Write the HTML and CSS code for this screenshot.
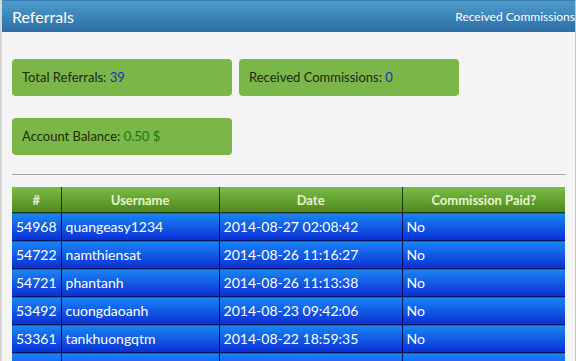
FILE: index.html
```
<!DOCTYPE html>
<html lang="en">
<head>
  <meta charset="UTF-8">
  <title>Referrals</title>
  <link rel="stylesheet" href="styles.css">
</head>
<body>
  <div class="panel">
    <div class="panel-head">
      <h1>Referrals</h1>
      <span class="head-link">Received Commissions</span>
    </div>
    <div class="panel-body">
      <div class="stats">
        <div class="stat">Total Referrals: <span class="num">39</span></div>
        <div class="stat">Received Commissions: <span class="num">0</span></div>
        <div class="stat">Account Balance: <span class="money">0.50 $</span></div>
      </div>
      <hr>
      <table class="refs">
        <thead>
          <tr><th class="c-id">#</th><th class="c-user">Username</th><th class="c-date">Date</th><th>Commission Paid?</th></tr>
        </thead>
        <tbody>
          <tr><td>54968</td><td>quangeasy1234</td><td>2014-08-27 02:08:42</td><td>No</td></tr>
          <tr><td>54722</td><td>namthiensat</td><td>2014-08-26 11:16:27</td><td>No</td></tr>
          <tr><td>54721</td><td>phantanh</td><td>2014-08-26 11:13:38</td><td>No</td></tr>
          <tr><td>53492</td><td>cuongdaoanh</td><td>2014-08-23 09:42:06</td><td>No</td></tr>
          <tr><td>53361</td><td>tankhuongqtm</td><td>2014-08-22 18:59:35</td><td>No</td></tr>
          <tr><td>53360</td><td>tanfhuong</td><td>2014-08-22 18:51:02</td><td>No</td></tr>
        </tbody>
      </table>
    </div>
  </div>
</body>
</html>
```

FILE: styles.css
```
body {
  margin: 0;
  font-family: Lato, 'Open Sans', Arial, sans-serif;
  background: #fff;
  color: #1c2b14;
}
.panel {
  border-left: 2px solid #d6d6d6;
  border-right: 1px solid #c8c8c8;
  background: #f4f4f4;
  height: 361px;
  overflow: hidden;
}
.panel-head {
  height: 32px;
  margin-left: -2px;
  display: flex;
  align-items: center;
  justify-content: space-between;
  padding: 0 0 0 12px;
  background: linear-gradient(#4d9ccb, #2d6da4);
  border-top: 1px solid #3a7cb0;
  box-sizing: border-box;
  color: #fff;
}
.panel-head h1 {
  margin: 0;
  font-size: 16px;
  font-weight: normal;
}
.head-link {
  font-size: 12px;
  white-space: nowrap;
}
.panel-body {
  padding: 27px 9px 0 10px;
}
.stats {
  display: grid;
  grid-template-columns: 220px 220px;
  gap: 22px 7px;
}
.stat {
  background: #7ab648;
  border-radius: 4px;
  height: 37px;
  line-height: 37px;
  padding-left: 10px;
  font-size: 13px;
}
.num {
  color: #1530c8;
}
.money {
  color: #177a10;
}
hr {
  border: 0;
  border-top: 1px solid #a8a8a8;
  margin: 19px 0 12px 0;
}
.refs {
  width: 553px;
  border-collapse: collapse;
  font-size: 14px;
}
.refs th {
  height: 25px;
  padding: 0;
  background: linear-gradient(#7cbb45, #4e8a1f);
  color: #e8f2d2;
  font-size: 13px;
  font-weight: bold;
  border-right: 1px solid #1e3a0a;
  border-bottom: 1px solid #1e3a0a;
}
.refs th:last-child,
.refs td:last-child {
  border-right: 0;
}
.refs .c-id { width: 46px; }
.refs .c-user { width: 157px; }
.refs .c-date { width: 182px; }
.refs td {
  height: 27px;
  padding: 0 4px;
  background: linear-gradient(#1a86f4, #0a2ed4);
  color: #fff;
  border-right: 1px solid #06105a;
  border-bottom: 1px solid #06105a;
}
```
